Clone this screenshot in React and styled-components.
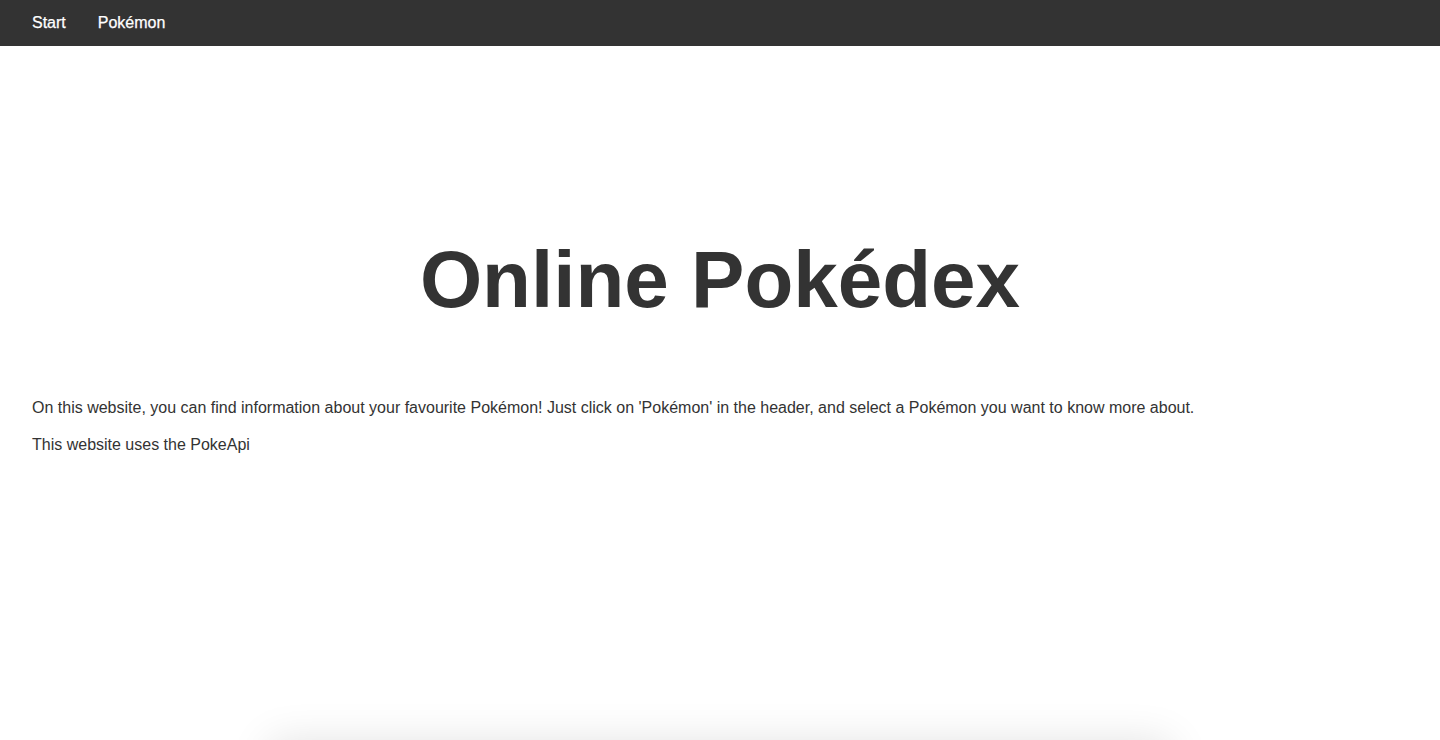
import React from 'react';
import styled, { createGlobalStyle } from 'styled-components';

const GlobalStyle = createGlobalStyle`
  body {
    margin: 0;
    font-family: 'Liberation Sans', Helvetica, Arial, sans-serif;
    color: #333;
    background: #fff;
  }
`;

const App = () => {
  return (
    <>
      <GlobalStyle />
      <Header>
        <Nav>
          <NavLink href="#start">Start</NavLink>
          <NavLink href="#pokemon">Pokémon</NavLink>
        </Nav>
      </Header>
      <Main>
        <Title>Online Pokédex</Title>
        <Text>
          On this website, you can find information about your favourite Pokémon! Just click on
          'Pokémon' in the header, and select a Pokémon you want to know more about.
        </Text>
        <Text>This website uses the PokeApi</Text>
        <Card />
      </Main>
    </>
  );
};

export default App;

// Styled Components

const Header = styled.header`
  height: 46px;
  background-color: #333;
  display: flex;
  align-items: center;
`;

const Nav = styled.nav`
  display: flex;
  padding: 0 16px;
`;

const NavLink = styled.a`
  color: #fff;
  text-decoration: none;
  font-size: 16px;
  padding: 0 16px;
  line-height: 46px;
  -webkit-text-stroke: 0.25px #fff;
`;

const Main = styled.main`
  padding: 0 32px 60px;
`;

const Title = styled.h1`
  margin: 188px 0 72px;
  font-size: 80px;
  font-weight: bold;
  text-align: center;
  color: #333;
`;

const Text = styled.p`
  margin: 0 0 16px;
  font-size: 16px;
  line-height: 1.3;
  color: #333;
`;

const Card = styled.section`
  width: 900px;
  height: 320px;
  margin: 286px auto 0;
  background: #fff;
  box-shadow: 0 0 40px rgba(0, 0, 0, 0.12);
`;
